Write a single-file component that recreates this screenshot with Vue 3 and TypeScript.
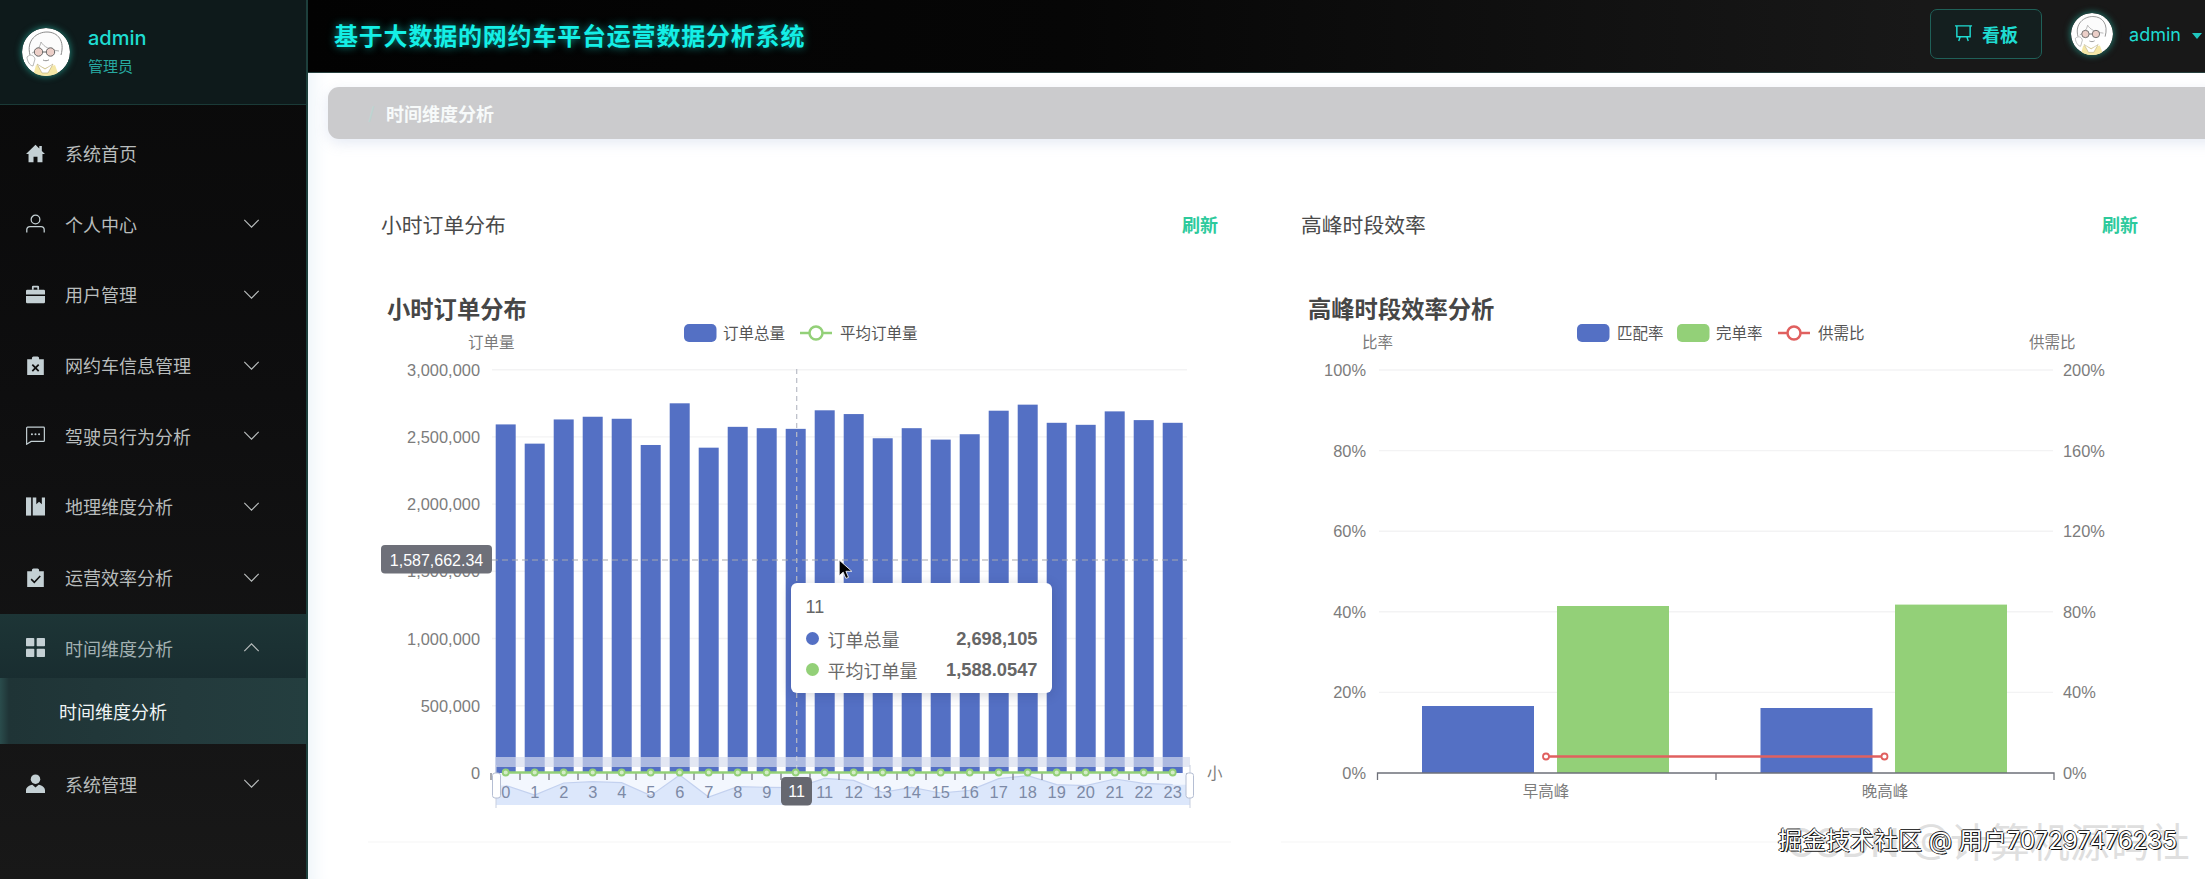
<script setup lang="ts">
const menu = [
  { label: '系统首页', icon: 'home', arrow: false },
  { label: '个人中心', icon: 'person', arrow: true },
  { label: '用户管理', icon: 'case', arrow: true },
  { label: '网约车信息管理', icon: 'clipx', arrow: true },
  { label: '驾驶员行为分析', icon: 'chat', arrow: true },
  { label: '地理维度分析', icon: 'book', arrow: true },
  { label: '运营效率分析', icon: 'clipc', arrow: true },
]

const values = [2593, 2450, 2630, 2650, 2635, 2440, 2750, 2420, 2575, 2565, 2560, 2698, 2670, 2490, 2565, 2480, 2520, 2695, 2740, 2605, 2590, 2690, 2625, 2605]
const zeroY = 773
const plotL = 491
const step = 29
const cx = (i: number) => plotL + step * i + 14.7
const barY = (v: number) => zeroY - (v / 3000) * 403.3
const bars = values.map((v, i) => ({ x: cx(i) - 10, y: barY(v), h: zeroY - barY(v) }))

const yTicks = ['3,000,000', '2,500,000', '2,000,000', '1,500,000', '1,000,000', '500,000', '0'].map((t, i) => ({ t, y: 369.7 + i * 67.2 }))
const xLabels = values.map((_, i) => ({ t: i === 10 ? '' : String(i), x: cx(i) }))
const ticks = Array.from({ length: 25 }, (_, i) => plotL + step * i)

const sparkY = (v: number) => 775 + ((2750 - v) / 330) * 22
const sparkPts = values.map((v, i) => `${cx(i)},${sparkY(v)}`).join(' L')
const sparkLine = `M${sparkPts}`
const sparkArea = `M496,805 L496,${sparkY(values[0])} L${sparkPts} L1190,${sparkY(values[23])} L1190,805 Z`

const leftTicks = ['100%', '80%', '60%', '40%', '20%', '0%'].map((t, i) => ({ t, y: 370 + i * 80.6 }))
const rightTicks = ['200%', '160%', '120%', '80%', '40%', '0%'].map((t, i) => ({ t, y: 370 + i * 80.6 }))
const peakBars = [
  { x: 1422, y: 706, w: 112, c: '#5470c4' },
  { x: 1557, y: 606, w: 112, c: '#93d078' },
  { x: 1760.500, y: 708, w: 112, c: '#5470c4' },
  { x: 1895, y: 604.6, w: 112, c: '#93d078' },
]
</script>

<template>
  <div class="app">
    <svg class="defs" width="0" height="0" aria-hidden="true">
      <symbol id="avatar" viewBox="0 0 48 48">
        <circle cx="24" cy="24" r="24" fill="#fff" />
        <path d="M8 27C4 12 15 4 25 4c11 0 18 9 14 23" fill="#fcfcfc" stroke="#8a8a8a" stroke-width="1" />
        <path d="M10 25c5-2 8-6 9-11 3 5 9 8 18 9" fill="none" stroke="#a8a8a8" stroke-width=".9" />
        <path d="M11 48l3-11 9 3 10-3 4 11z" fill="#f5e7a6" />
        <path d="M15 36l8 5 8-5-5 9h-6z" fill="#fff" stroke="#b5a878" stroke-width=".6" />
        <ellipse cx="23" cy="29" rx="11" ry="8" fill="#fff" />
        <circle cx="16.500" cy="24" r="4.200" fill="#eccfc8" stroke="#666" stroke-width="1" />
        <circle cx="28.500" cy="24" r="4.200" fill="#eccfc8" stroke="#666" stroke-width="1" />
        <path d="M20.700 24h3.600" stroke="#666" stroke-width="1" />
        <path d="M21 32c2 1 4 1 6-.2" fill="none" stroke="#777" stroke-width=".8" />
        <path d="M5 29c3-3 7-2 8 2l-2 7c-3 0-6-5-6-9z" fill="#fff" stroke="#9a9a9a" stroke-width=".7" />
      </symbol>
    </svg>

    <aside class="sidebar">
      <div class="profile">
        <svg class="side-avatar"><use href="#avatar" /></svg>
        <div class="profile-text">
          <div class="profile-name">admin</div>
          <div class="profile-role">管理员</div>
        </div>
      </div>

      <nav class="menu">
        <div v-for="m in menu" :key="m.label" class="item">
          <svg class="icon" viewBox="0 0 24 24">
            <path v-if="m.icon === 'home'" d="M12 1 0 12.500h3.200V23H9.500v-7h5v7h6.300V12.500H24l-4-3.800V2.500h-3.200v3.200z" fill="currentColor" />
            <g v-else-if="m.icon === 'person'" fill="none" stroke="currentColor" stroke-width="1.600">
              <circle cx="12" cy="7" r="5.500" />
              <path d="M1 23.500v-3.500a4 4 0 0 1 4-4h14a4 4 0 0 1 4 4v3.500" />
            </g>
            <g v-else-if="m.icon === 'case'" fill="currentColor">
              <path d="M7.500 6V2.500A1.500 1.500 0 0 1 9 1h6a1.500 1.500 0 0 1 1.500 1.500V6h-2.200V3.200H9.700V6z" />
              <path d="M0 7.500A1.500 1.500 0 0 1 1.500 6h21A1.500 1.500 0 0 1 24 7.500V12H0z" />
              <path d="M0 14h24v7.500a1.500 1.500 0 0 1-1.500 1.500h-21A1.500 1.500 0 0 1 0 21.500z" />
            </g>
            <g v-else-if="m.icon === 'clipx'">
              <path d="M1.500 4H7.500V2.500A2 2 0 0 1 9.500.5h5a2 2 0 0 1 2 2V4h6v20h-21z" fill="currentColor" />
              <path d="M8 11l8 8M16 11l-8 8" stroke="#0e0e0e" stroke-width="2.200" />
            </g>
            <g v-else-if="m.icon === 'chat'">
              <path d="M1.800 1.500h20.400a1 1 0 0 1 1 1v16a1 1 0 0 1-1 1H6.500L.8 23V2.500a1 1 0 0 1 1-1z" fill="none" stroke="currentColor" stroke-width="1.500" />
              <circle cx="7.500" cy="10.500" r="1.300" fill="currentColor" /><circle cx="12" cy="10.500" r="1.300" fill="currentColor" /><circle cx="16.500" cy="10.500" r="1.300" fill="currentColor" />
            </g>
            <g v-else-if="m.icon === 'book'" fill="currentColor">
              <rect x="0" y="0.500" width="6.500" height="23" />
              <path d="M8.500 .5H13v8.500l3.500-3 3.500 3V.5h4v23H8.500z" />
            </g>
            <g v-else-if="m.icon === 'clipc'">
              <path d="M1.500 4H7.500V2.500A2 2 0 0 1 9.500.5h5a2 2 0 0 1 2 2V4h6v20h-21z" fill="currentColor" />
              <path d="M6.500 14l4 4 7.500-8" stroke="#0f0f0f" stroke-width="2" fill="none" />
            </g>
          </svg>
          <span class="label">{{ m.label }}</span>
          <svg v-if="m.arrow" class="chev" viewBox="0 0 18 10"><path d="M1 1l8 8 8-8" fill="none" stroke="currentColor" stroke-width="1.300" /></svg>
        </div>

        <div class="item item-open">
          <svg class="icon" viewBox="0 0 24 24" fill="currentColor">
            <rect x="0" y="0" width="10.500" height="10.500" rx="1" /><rect x="13.500" y="0" width="10.500" height="10.500" rx="1" />
            <rect x="0" y="13.500" width="10.500" height="10.500" rx="1" /><rect x="13.500" y="13.500" width="10.500" height="10.500" rx="1" />
          </svg>
          <span class="label">时间维度分析</span>
          <svg class="chev" viewBox="0 0 18 10"><path d="M1 9l8-8 8 8" fill="none" stroke="currentColor" stroke-width="1.300" /></svg>
        </div>
        <div class="sub">时间维度分析</div>
        <div class="item item-last">
          <svg class="icon" viewBox="0 0 24 24" fill="currentColor">
            <circle cx="12" cy="6.500" r="6" />
            <path d="M0 24v-3.500c0-3.800 3.500-6 8-7l4 3.500 4-3.500c4.500 1 8 3.200 8 7V24z" />
          </svg>
          <span class="label">系统管理</span>
          <svg class="chev" viewBox="0 0 18 10"><path d="M1 1l8 8 8-8" fill="none" stroke="currentColor" stroke-width="1.300" /></svg>
        </div>
      </nav>
    </aside>

    <div class="right">
      <header class="topbar">
        <h1 class="title">基于大数据的网约车平台运营数据分析系统</h1>
        <div class="top-actions">
          <button class="board">
            <svg class="board-icon" viewBox="0 0 20 20" fill="none" stroke="currentColor" stroke-width="1.500">
              <path d="M1 2h18M3 2v11.500h14V2M6.500 13.500 5 18M13.500 13.500 15 18" />
            </svg>
            <span>看板</span>
          </button>
          <svg class="top-avatar"><use href="#avatar" /></svg>
          <span class="top-name">admin</span>
          <span class="caret"></span>
        </div>
      </header>

      <main class="content">
        <div class="crumb"><span class="slash">/</span><span class="crumb-text">时间维度分析</span></div>

        <section class="cards">
          <article class="card">
            <div class="card-head"><span class="card-title">小时订单分布</span><span class="refresh">刷新</span></div>
            <div class="chart">
              <svg class="chart-svg" viewBox="368 285 863 556" width="863" height="556">
                <text class="c-title" x="387" y="309">小时订单分布</text>
                <rect x="684" y="324" width="32.500" height="18" rx="5" fill="#5470c4" />
                <text class="c-legend" x="723" y="333">订单总量</text>
                <path d="M800 333h32" stroke="#93d078" stroke-width="2.500" />
                <circle cx="816" cy="333" r="6.500" fill="#fff" stroke="#93d078" stroke-width="2.500" />
                <text class="c-legend" x="840" y="333">平均订单量</text>
                <text class="c-axis" x="468" y="342">订单量</text>

                <line v-for="t in yTicks.slice(0, 6)" :key="t.t" x1="492" x2="1187" :y1="t.y" :y2="t.y" stroke="#f3f3f4" stroke-width="1.400" />
                <text v-for="t in yTicks" :key="'l' + t.t" class="c-num end" x="480" :y="t.y">{{ t.t }}</text>

                <rect v-for="(b, i) in bars" :key="i" :x="b.x" :y="b.y" width="20" :height="b.h" fill="#5470c4" />

                <line x1="796.700" x2="796.700" y1="369" y2="773" stroke="#b9bcc6" stroke-width="1.200" stroke-dasharray="5 4" />
                <line x1="492" x2="1187" y1="560" y2="560" stroke="#a5a7ad" stroke-width="1.200" stroke-dasharray="6 4" />
                <rect x="381" y="545" width="111" height="28.500" rx="4" fill="#6e7079" />
                <text class="c-tag" x="436.500" y="560">1,587,662.34</text>

                <rect x="496" y="757" width="694" height="10" fill="#d5dcee" fill-opacity=".68" />
                <rect x="496" y="773" width="694" height="32" fill="#f3f7fe" />
                <path :d="sparkArea" fill="#dce7fb" />
                <path :d="sparkLine" fill="none" stroke="#c3d1ef" stroke-width="1.200" />
                <line v-for="t in ticks" :key="'t' + t" :x1="t" :x2="t" y1="773" y2="780" stroke="#6e7079" stroke-width="1.200" />
                <path d="M505.700 772.500H1172" stroke="#93d078" stroke-width="2.500" />
                <circle v-for="(_, i) in values" :key="'c' + i" :cx="cx(i)" cy="772.500" r="3" fill="#d3ecc7" stroke="#93d078" stroke-width="1.800" />
                <text v-for="l in xLabels" :key="'x' + l.x" class="c-num mid blue" :x="l.x" y="791.500">{{ l.t }}</text>
                <rect x="781" y="777" width="31" height="28.500" rx="4.500" fill="#666870" />
                <text class="c-tag" x="796.500" y="791.500">11</text>

                <path d="M496 765v43M1190 765v43" stroke="#c8cfdf" stroke-width="1" />
                <rect x="492.500" y="773" width="8" height="25" rx="2.500" fill="#fff" stroke="#b5bed3" stroke-width="1" />
                <rect x="1186" y="773" width="7.500" height="25" rx="2.500" fill="#fff" stroke="#b5bed3" stroke-width="1" />
                <text class="c-axis" x="1207" y="773">小</text>
              </svg>

              <div class="tip">
                <div class="tip-title">11</div>
                <div class="tip-row"><i class="dot dot-blue"></i><span class="tip-label">订单总量</span><b class="tip-val">2,698,105</b></div>
                <div class="tip-row"><i class="dot dot-green"></i><span class="tip-label">平均订单量</span><b class="tip-val">1,588.0547</b></div>
              </div>
              <svg class="cursor" viewBox="0 0 14 20">
                <path d="M1 1v15l3.800-3.500 2.500 6 2.600-1-2.500-5.800H13z" fill="#000" stroke="#fff" stroke-width=".8" />
              </svg>
            </div>
          </article>

          <article class="card card-b">
            <div class="card-head"><span class="card-title">高峰时段效率</span><span class="refresh">刷新</span></div>
            <div class="chart">
              <svg class="chart-svg" viewBox="1281 285 863 556" width="863" height="556">
                <text class="c-title" x="1308" y="309">高峰时段效率分析</text>
                <rect x="1577" y="324" width="32.500" height="18" rx="5" fill="#5470c4" />
                <text class="c-legend" x="1617" y="333">匹配率</text>
                <rect x="1677" y="324" width="32.500" height="18" rx="5" fill="#93d078" />
                <text class="c-legend" x="1716" y="333">完单率</text>
                <path d="M1778 333h32" stroke="#e0605f" stroke-width="2.500" />
                <circle cx="1794" cy="333" r="6.500" fill="#fff" stroke="#e0605f" stroke-width="2.500" />
                <text class="c-legend" x="1818" y="333">供需比</text>
                <text class="c-axis" x="1362" y="342">比率</text>
                <text class="c-axis" x="2029" y="342">供需比</text>

                <line v-for="t in leftTicks.slice(0, 5)" :key="t.t" x1="1379" x2="2053" :y1="t.y" :y2="t.y" stroke="#f3f3f4" stroke-width="1.400" />
                <text v-for="t in leftTicks" :key="'a' + t.t" class="c-num end" x="1366" :y="t.y">{{ t.t }}</text>
                <text v-for="t in rightTicks" :key="'b' + t.t" class="c-num" x="2063" :y="t.y">{{ t.t }}</text>

                <rect v-for="b in peakBars" :key="b.x" :x="b.x" :y="b.y" :width="b.w" :height="773 - b.y" :fill="b.c" />

                <path d="M1377.500 780v-7H2054v7M1716 773v7" fill="none" stroke="#6e7079" stroke-width="1.300" />
                <text class="c-cat" x="1546" y="791.500">早高峰</text>
                <text class="c-cat" x="1885" y="791.500">晚高峰</text>

                <path d="M1546 756.500H1884.500" stroke="#e0605f" stroke-width="2.500" />
                <circle cx="1546" cy="756.500" r="3" fill="#fff" stroke="#e0605f" stroke-width="1.800" />
                <circle cx="1884.500" cy="756.500" r="3" fill="#fff" stroke="#e0605f" stroke-width="1.800" />
              </svg>
            </div>
          </article>
        </section>
      </main>
    </div>

    <div class="mark-back">CSDN @计算机源码社</div>
    <div class="mark-front">掘金技术社区 @ 用户707297476235</div>
  </div>
</template>

<style scoped>
.app {
  position: relative;
  display: flex;
  width: 2205px;
  height: 879px;
  overflow: hidden;
  background: #fff;
  font-family: Inter, "Noto Sans CJK SC", sans-serif;
}
.defs { position: absolute; }

/* Sidebar */
.sidebar {
  flex: none;
  width: 308px;
  box-sizing: border-box;
  border-right: 2px solid #1d3f3c;
  background: linear-gradient(180deg, #090909 0%, #0e0e0f 45%, #181818 100%);
}
.profile {
  display: flex;
  align-items: center;
  gap: 18px;
  height: 105px;
  box-sizing: border-box;
  padding: 0 0 0 22px;
  background: #0e1a1b;
  border-bottom: 1px solid #1a3a37;
}
.side-avatar {
  width: 48px;
  height: 48px;
  border-radius: 50%;
  box-shadow: 0 0 6px 1px rgba(40, 190, 170, .55);
}
.profile-text { display: flex; flex-direction: column; gap: 5px; margin-top: -1px; }
.profile-name { color: #1fdcd2; font-size: 20px; line-height: 26px; font-weight: 500; }
.profile-role { color: #27a9a1; font-size: 15px; line-height: 22px; }

.menu {
  display: flex;
  flex-direction: column;
  gap: 6.700px;
  padding-top: 14px;
}
.item {
  display: flex;
  align-items: center;
  height: 64px;
  box-sizing: border-box;
  padding: 4px 0 0 26px;
  color: #b8bcbc;
  font-size: 18px;
}
.icon { width: 19px; height: 19px; color: #c4d0d4; flex: none; }
.label { margin-left: 20px; flex: 1; }
.chev { width: 17px; height: 9px; margin-right: 46px; color: #b8bcbc; flex: none; }
.item-open {
  margin-bottom: -6.700px;
  background: linear-gradient(180deg, #1d3536 0%, #192d30 100%);
  color: #a3b1b2;
}
.sub {
  display: flex;
  align-items: center;
  height: 66px;
  padding-left: 59px;
  color: #f0f5f5;
  font-size: 18px;
  background: linear-gradient(90deg, #2a4c4c 0, #1f3436 9px, #233a3c 60%, #243e3f 100%);
}
.item-last { margin-top: -.700px; }

/* Top bar */
.right { flex: 1; min-width: 0; display: flex; flex-direction: column; }
.topbar {
  flex: none;
  display: flex;
  align-items: center;
  justify-content: space-between;
  height: 73px;
  box-sizing: border-box;
  padding-left: 26px;
  background: linear-gradient(90deg, #020202 0%, #060606 40%, #181818 85%);
  border-bottom: 1px solid #27403e;
}
.title {
  margin: -3px 0 0;
  color: #14efe6;
  font-size: 24px;
  font-weight: 700;
  letter-spacing: .8px;
  text-shadow: 0 0 8px rgba(20, 230, 220, .65);
}
.top-actions { display: flex; align-items: center; height: 100%; }
.board {
  display: flex;
  align-items: center;
  justify-content: center;
  gap: 9px;
  width: 112px;
  height: 50px;
  margin: -5px 29px 0 0;
  background: #141f1f;
  border: 1px solid #1f6058;
  border-radius: 7px;
  color: #1fdcd2;
  font: 700 18px Inter, "Noto Sans CJK SC", sans-serif;
}
.board-icon { width: 19px; height: 19px; }
.top-avatar {
  width: 42px;
  height: 42px;
  margin-top: -5px;
  border-radius: 50%;
  box-shadow: 0 0 6px 1px rgba(40, 190, 170, .55);
}
.top-name { margin: -3px 0 0 16px; color: #1fdcd2; font-size: 18px; }
.caret {
  width: 0;
  height: 0;
  margin: 0 3px 0 11px;
  border-left: 5px solid transparent;
  border-right: 5px solid transparent;
  border-top: 6px solid #1fc6be;
}

/* Content */
.content { flex: 1; min-height: 0; background: #fff; box-shadow: inset 22px 0 18px -16px #edf4f9; }
.crumb {
  display: flex;
  align-items: center;
  height: 52px;
  margin: 14px -30px 0 20px;
  padding-left: 40px;
  border-radius: 11px 0 0 11px;
  background: #cbcbcd;
  box-shadow: 0 4px 14px rgba(225, 230, 242, .85);
}
.slash { width: 18px; color: #bcd5d2; font-size: 18px; }
.crumb-text { color: #f7fafa; font-size: 18px; font-weight: 700; }

.cards {
  display: grid;
  grid-template-columns: 863px 863px;
  gap: 50px;
  margin: 55px 0 0 60px;
}
.card { border-bottom: 2px solid #fafafa; width: 863px; }
.card-head {
  display: flex;
  align-items: center;
  justify-content: space-between;
  height: 60px;
  padding: 0 13px 0 13px;
  margin-bottom: 31px;
}
.card-b .card-head { padding: 0 6px 0 20px; }
.card-title { color: #4a4a4a; font-size: 20.800px; }
.refresh { color: #2dca9c; font-size: 18px; font-weight: 700; }

.chart { position: relative; height: 556px; }
.chart-svg { display: block; overflow: visible; }
.chart-svg text {
  font-family: "Liberation Sans", "Noto Sans CJK SC", sans-serif;
  dominant-baseline: central;
}
.chart-svg .c-title { font-family: Inter, "Noto Sans CJK SC", sans-serif; font-size: 23.300px; font-weight: 700; fill: #464646; }
.c-legend { font-size: 15.500px; fill: #555; }
.c-axis { font-size: 15.500px; fill: #7a7a7a; }
.c-num { font-size: 16.400px; fill: #7c7c7c; }
.c-cat { font-size: 15.500px; fill: #7c7c7c; text-anchor: middle; }
.c-num.end { text-anchor: end; }
.c-num.mid { text-anchor: middle; }
.c-num.blue { fill: #7d8aa6; }
.c-tag { font-size: 16px; fill: #fff; text-anchor: middle; }

/* Tooltip over the chart */
.tip {
  position: absolute;
  left: 423px;
  top: 298px;
  width: 261px;
  height: 110px;
  box-sizing: border-box;
  padding: 11px 14.500px 0;
  background: #fff;
  border-radius: 6px;
  box-shadow: 0 2px 12px rgba(30, 40, 80, .22);
  color: #666;
  font-family: "Liberation Sans", "Noto Sans CJK SC", sans-serif;
}
.tip-title { font-size: 18px; line-height: 26px; margin-bottom: 3px; }
.tip-row { display: flex; align-items: center; height: 31px; }
.dot { width: 13px; height: 13px; border-radius: 50%; margin-right: 9px; flex: none; }
.dot-blue { background: #5470c4; }
.dot-green { background: #93d078; }
.tip-label { flex: 1; font-size: 18px; color: #6a6a6a; }
.tip-val { font-size: 18.300px; font-weight: 700; color: #666; }
.cursor { position: absolute; left: 470px; top: 274px; width: 15px; height: 21px; }

/* Watermarks over everything */
.mark-back {
  position: absolute;
  left: 1786px;
  top: 816px;
  color: #dfdfdf;
  font-size: 40px;
  line-height: 54px;
  white-space: nowrap;
}
.mark-front {
  position: absolute;
  left: 1778px;
  top: 825px;
  color: #fff;
  font-size: 24px;
  line-height: 32px;
  white-space: nowrap;
  text-shadow: 1px 1px 0 #111, -1px 0 0 #111, 0 -1px 0 #333;
}
</style>
